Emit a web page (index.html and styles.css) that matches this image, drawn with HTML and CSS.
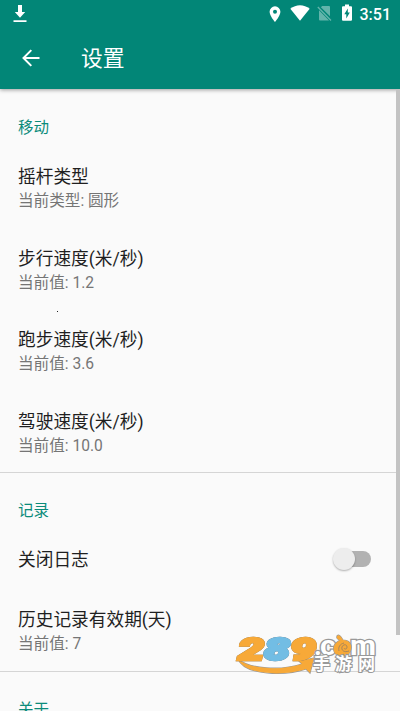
FILE: index.html
```html
<!DOCTYPE html>
<html lang="zh-CN">
<head>
<meta charset="utf-8">
<title>设置</title>
<link rel="stylesheet" href="styles.css">
</head>
<body>
<div class="screen">
  <header class="appbar">
    <div class="status">
      <svg class="download" width="14" height="18" viewBox="0 0 14 18"><path d="M5 0h4v7h3.2L7 12.7 1.800 7H5zM.5 15.200h13v1.900H.5z"/></svg>
      <div class="tray">
        <svg class="pin" width="12" height="17" viewBox="0 0 12 17"><path fill-rule="evenodd" d="M6 .3A5.400 5.400 0 0 0 .6 5.700C.6 9.700 6 16 6 16s5.400-6.300 5.400-10.300A5.400 5.400 0 0 0 6 .3zm0 3.500a2 2 0 1 1 0 4 2 2 0 0 1 0-4z"/></svg>
        <svg class="wifi" width="20" height="17" viewBox="0 0 20 17"><path d="M.3 3.700C6-1 14-1 19.700 3.700L10 15.700z"/></svg>
        <svg class="sim" width="15" height="17" viewBox="0 0 15 17"><path d="M5.200 1H12q1 0 1 1v9.200L3.900 2.300zM2 5.300 12 15.500H3q-1 0-1-1z"/><path class="slash" d="M.8 2 14 15.500"/></svg>
        <svg class="battery" width="12" height="18" viewBox="0 0 12 18"><path fill-rule="evenodd" d="M4 .5h4v1.700h2q1 0 1 1v12.600q0 1-1 1H2q-1 0-1-1V3.200q0-1 1-1h2zM6.800 4.500 3.300 10.300h2v4.200l3.500-6H6.800z"/></svg>
        <span class="clock">3:51</span>
      </div>
    </div>
    <div class="toolbar">
      <svg class="back" width="18" height="18" viewBox="0 0 18 18"><path d="M17.500 9H1.700M9.300 1.100 1.500 9l7.800 7.900"/></svg>
      <h1>设置</h1>
    </div>
  </header>
  <main>
    <section>
      <h2>移动</h2>
      <div class="item"><div class="title">摇杆类型</div><div class="summary">当前类型: 圆形</div></div>
      <div class="item"><div class="title">步行速度(米/秒)</div><div class="summary">当前值: 1.2</div></div>
      <div class="item"><div class="title">跑步速度(米/秒)</div><div class="summary">当前值: 3.6</div></div>
      <div class="item"><div class="title">驾驶速度(米/秒)</div><div class="summary">当前值: 10.0</div></div>
    </section>
    <section>
      <h2>记录</h2>
      <div class="item toggle"><div class="title">关闭日志</div><div class="switch"><span class="thumb"></span></div></div>
      <div class="item"><div class="title">历史记录有效期(天)</div><div class="summary">当前值: 7</div></div>
    </section>
    <section>
      <h2>关于</h2>
    </section>
  </main>
  <div class="scrollbar"></div>
  <div class="speck"></div>
  <svg class="watermark" width="144" height="42" viewBox="0 0 144 42">
    <path class="orange" d="M2 25C13 35 45 37 66 30l-3-3 15-3-4 15-4-4C50 42 9 42 2 25z"/>
    <g class="digits">
      <text class="orange" x="2" y="25.500" textLength="26" lengthAdjust="spacingAndGlyphs">2</text>
      <text class="orange" x="54" y="25.500" textLength="26" lengthAdjust="spacingAndGlyphs">9</text>
      <text class="blue" x="28" y="25.500" textLength="26" lengthAdjust="spacingAndGlyphs">8</text>
    </g>
    <text class="com" x="78" y="21">.</text>
    <text class="com" x="84" y="21" textLength="16" lengthAdjust="spacingAndGlyphs">c</text>
    <text class="com" x="114" y="21" textLength="26" lengthAdjust="spacingAndGlyphs">m</text>
    <path class="orange" d="M104 6q-4-1-3-4 2-2 4 1l2 3c6 0 9 4 8 9-1 6-7 9-12 7-6-2-7-9-3-13z"/>
    <path class="swirl" d="M113 17c-5 2-8-1-7-4s5-3 5 0-3 2-3 1M103 17c-1-4 1-7 5-8"/>
    <g class="cn">
      <text x="77" y="36">手</text>
      <text x="99" y="36">游</text>
      <text x="122" y="36">网</text>
    </g>
  </svg>
</div>
</body>
</html>
```
FILE: styles.css
```css
* { box-sizing: border-box; }
body {
  margin: 0;
  font-family: Roboto, "Noto Sans CJK SC", sans-serif;
  background: #fafafa;
}
.screen {
  position: relative;
  height: 711px;
  overflow: hidden;
}
.appbar {
  position: relative;
  height: 89px;
  background: #028677;
  box-shadow: 0 1px 4px rgba(0, 0, 0, .38);
  color: #fff;
}
.status {
  display: flex;
  justify-content: space-between;
  height: 27px;
  padding: 5px 9px 0 13px;
}
.status svg { fill: #fff; }
.tray { display: flex; align-items: flex-start; }
.pin { margin-top: 1px; }
.wifi { margin-left: 9px; }
.sim { margin-left: 7px; opacity: .38; }
.slash { stroke: #fff; stroke-width: 1.3; }
.battery { margin-left: 9px; margin-top: -1px; }
.clock {
  margin-left: 7px;
  font-size: 16px;
  font-weight: 500;
  line-height: 19px;
}
.toolbar {
  display: flex;
  align-items: center;
  height: 62px;
  padding-left: 22px;
}
.back { fill: none; stroke: #fff; stroke-width: 2; }
h1 {
  margin: 1px 0 0 41px;
  font-size: 21.800px;
  font-weight: 400;
  line-height: 32px;
}
section { border-bottom: 1px solid #d5d5d5; }
section:first-child { height: 384px; }
section:nth-child(2) { height: 199px; }
h2 {
  height: 57px;
  margin: 0;
  padding: 28px 18px 0;
  color: #0b8b7a;
  font-size: 15.500px;
  font-weight: 400;
  line-height: 23px;
}
section + section h2 { height: 56px; padding-top: 27px; }
.item {
  height: 81.700px;
  padding: 19px 18px 0;
}
.title {
  color: #1f1f1f;
  font-size: 17.700px;
  line-height: 25px;
}
.summary {
  color: #757575;
  font-size: 15.600px;
  line-height: 22px;
}
.toggle {
  display: flex;
  align-items: center;
  justify-content: space-between;
  height: 60px;
  padding: 0 29px 0 18px;
}
.toggle .title { padding-top: 2px; }
.switch {
  display: flex;
  align-items: center;
  width: 31px;
  height: 16px;
  border-radius: 8px;
  background: #b2b2b2;
}
.thumb {
  flex: none;
  width: 22px;
  height: 22px;
  margin-left: -7px;
  border-radius: 50%;
  background: #ededed;
  box-shadow: 0 1px 2px rgba(0, 0, 0, .3);
}
.scrollbar {
  position: absolute;
  top: 89px;
  right: 0;
  width: 4px;
  height: 546px;
  background: #c3c3c3;
}
.speck {
  position: absolute;
  left: 57px;
  top: 311px;
  width: 1px;
  height: 1px;
  background: #222;
}
.watermark {
  position: absolute;
  left: 236px;
  top: 634px;
  overflow: visible;
}
.watermark path, .watermark text {
  stroke: #999;
  stroke-width: 1.200;
  paint-order: stroke;
}
.watermark .orange { fill: #f7a938; }
.watermark .blue { fill: #72bde4; }
.digits {
  font: italic 900 32px Roboto, sans-serif;
}
.watermark .digits text {
  stroke-width: 2.600;
  filter: drop-shadow(0 0 .7px #666);
}
.watermark .digits .orange { stroke: #f7a938; }
.watermark .digits .blue { stroke: #72bde4; }
.watermark .com {
  fill: #fff;
  stroke-width: 2.500;
  font: 700 27px Roboto, sans-serif;
}
.watermark .swirl { fill: none; stroke: #a9865a; stroke-width: 1; }
.watermark .cn text {
  fill: #fff;
  stroke-width: 2.200;
}
.cn {
  font: 700 17px "Noto Sans CJK SC", sans-serif;
}
```
